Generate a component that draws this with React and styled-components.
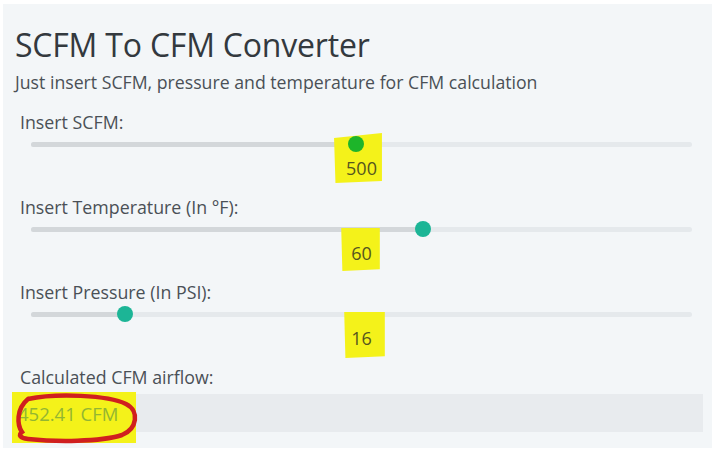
import React from "react"
import styled, { createGlobalStyle } from "styled-components"

const GlobalStyle = createGlobalStyle`
  html, body {
    margin: 0;
    padding: 0;
    background: #ffffff;
  }
  body {
    font-family: "Open Sans", "Noto Sans", "Liberation Sans", sans-serif;
    color: #444a50;
  }
`

const Page = styled.div`
  width: 720px;
  height: 453px;
  padding: 4px 8px 5px 3px;
  box-sizing: border-box;
`

const Card = styled.div`
  height: 100%;
  background: #f3f6f8;
  padding: 21px 9px 0 12px;
  box-sizing: border-box;
`

const Title = styled.h1`
  margin: 0;
  font-size: 32px;
  font-weight: 400;
  line-height: 40px;
  color: #33393e;
  letter-spacing: -0.2px;
`

const Subtitle = styled.p`
  margin: 5px 0 0;
  font-size: 17.7px;
  line-height: 24px;
  color: #4a5056;
`

const Field = styled.div`
  padding-left: 5px;
`

const Label = styled.div`
  font-size: 17.8px;
  line-height: 24px;
  color: #4a5056;
  margin-top: ${(p) => p.top}px;
`

const TrackWrap = styled.div`
  height: 16px;
  margin: 2px 11px 0 11px;
  display: flex;
  align-items: center;
`

const Track = styled.div`
  position: relative;
  flex: 1;
  height: 5px;
  border-radius: 3px;
  background: #e5e9ec;
`

const Fill = styled.div`
  height: 100%;
  border-radius: 3px;
  background: #d3d7da;
`

const Thumb = styled.div`
  position: absolute;
  z-index: 2;
  top: 50%;
  width: 16px;
  height: 16px;
  margin: -8px 0 0 -8px;
  border-radius: 50%;
  background: ${(p) => p.color};
`

const ValueRow = styled.div`
  display: flex;
  justify-content: center;
  align-items: center;
  height: 32px;
`

// marker highlight drawn behind the value
const Marked = styled.span`
  position: relative;
  font-size: 18px;
  line-height: 24px;
  color: #55551f;
  z-index: 0;

  &::before {
    content: "";
    position: absolute;
    z-index: -1;
    left: ${(p) => p.l}px;
    right: ${(p) => p.r}px;
    top: ${(p) => p.t}px;
    bottom: ${(p) => p.b}px;
    background: #f4f21a;
    clip-path: polygon(0 ${(p) => p.slant}%, 100% 0, 100% 96%, 3% 100%);
  }
`

const Output = styled.div`
  position: relative;
  margin-top: 5px;
  height: 38px;
  background: #e8ebee;
  display: flex;
  align-items: center;
  padding-left: 3px;
  font-size: 18.5px;
`

const OutputMark = styled.div`
  position: absolute;
  left: -3px;
  top: -2px;
  width: 124px;
  height: 51px;
  background: #f4f21a;
`

const OutputValue = styled.span`
  position: relative;
  color: #93b632;
`

const Circle = styled.svg`
  position: absolute;
  left: 1px;
  top: 1px;
  overflow: visible;
`

const sliders = [
  { label: "Insert SCFM:", value: "500", pos: 49.2, color: "#1db52a", top: 16, mark: { l: -12, r: -5, t: -23, b: -3, slant: 10 } },
  { label: "Insert Temperature (In °F):", value: "60", pos: 59.3, color: "#1cb596", top: 11, mark: { l: -10, r: -8, t: -13, b: -6, slant: 0 } },
  { label: "Insert Pressure (In PSI):", value: "16", pos: 14.2, color: "#1cb596", top: 11, mark: { l: -7, r: -13, t: -14, b: -8, slant: 0 } },
]

export default function App() {
  return (
    <Page>
      <GlobalStyle />
      <Card>
        <Title>SCFM To CFM Converter</Title>
        <Subtitle>Just insert SCFM, pressure and temperature for CFM calculation</Subtitle>
        {sliders.map((s) => (
          <Field key={s.label}>
            <Label top={s.top}>{s.label}</Label>
            <TrackWrap>
              <Track>
                <Fill style={{ width: `${s.pos}%` }} />
                <Thumb color={s.color} style={{ left: `${s.pos}%` }} />
              </Track>
            </TrackWrap>
            <ValueRow>
              <Marked {...s.mark}>{s.value}</Marked>
            </ValueRow>
          </Field>
        ))}
        <Field>
          <Label top={11}>Calculated CFM airflow:</Label>
        </Field>
        <Output>
          <OutputMark />
          <OutputValue>452.41 CFM</OutputValue>
          <Circle width="120" height="47" viewBox="0 0 120 47">
            <path
              d="M12 4 C40 -2 92 0 110 9 C124 16 121 34 106 40 C84 47 40 47 12 44 C4 43 2 40 6 37 C1 30 0 14 12 4"
              fill="none"
              stroke="#d01f1f"
              strokeWidth="4.5"
              strokeLinecap="round"
            />
          </Circle>
        </Output>
      </Card>
    </Page>
  )
}
